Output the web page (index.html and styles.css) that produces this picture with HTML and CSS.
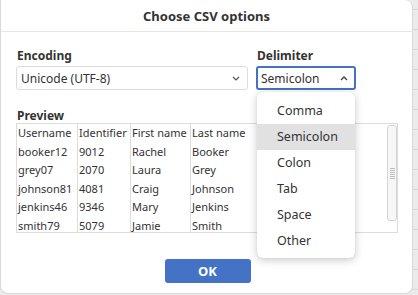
FILE: index.html
```html
<!DOCTYPE html>
<html>
<head>
<meta charset="utf-8">
<link rel="stylesheet" href="styles.css">
</head>
<body>
<div class="dialog">
  <div class="header">Choose CSV options</div>
  <div class="body">
    <div class="fields">
      <div class="field enc">
        <div class="label">Encoding</div>
        <div class="select">
          <span>Unicode (UTF-8)</span>
          <svg class="chev" width="8" height="5" viewBox="0 0 8 5"><path d="M1 1l3 3 3-3" fill="none" stroke="#555" stroke-width="1.2"/></svg>
        </div>
      </div>
      <div class="field delim">
        <div class="label">Delimiter</div>
        <div class="select focus">
          <span>Semicolon</span>
          <svg class="chev" width="8" height="5" viewBox="0 0 8 5"><path d="M1 4l3-3 3 3" fill="none" stroke="#444" stroke-width="1.4"/></svg>
        </div>
      </div>
    </div>
    <div class="label preview-label">Preview</div>
    <div class="table">
      <div class="col c1"><div>Username</div><div>booker12</div><div>grey07</div><div>johnson81</div><div>jenkins46</div><div>smith79</div></div>
      <div class="col c2"><div>Identifier</div><div>9012</div><div>2070</div><div>4081</div><div>9346</div><div>5079</div></div>
      <div class="col c3"><div>First name</div><div>Rachel</div><div>Laura</div><div>Craig</div><div>Mary</div><div>Jamie</div></div>
      <div class="col c4"><div>Last name</div><div>Booker</div><div>Grey</div><div>Johnson</div><div>Jenkins</div><div>Smith</div></div>
      <div class="scrollbar"><div class="grip"></div></div>
    </div>
    <div class="actions"><button class="ok">OK</button></div>
  </div>
  <div class="menu">
    <div class="item">Comma</div>
    <div class="item active">Semicolon</div>
    <div class="item">Colon</div>
    <div class="item">Tab</div>
    <div class="item">Space</div>
    <div class="item">Other</div>
  </div>
</div>
</body>
</html>
```

FILE: styles.css
```css
html, body {
  margin: 0;
  padding: 0;
}
body {
  width: 418px;
  height: 295px;
  overflow: hidden;
  background-color: #ebebeb;
  background-image: repeating-linear-gradient(to bottom, transparent 0, transparent 9px, #d8d8d8 9px, #d8d8d8 10px, transparent 10px, transparent 20px);
  font-family: "Noto Sans", "Open Sans", sans-serif;
  color: #333;
}
.dialog {
  position: relative;
  box-sizing: border-box;
  width: 413px;
  height: 294px;
  background: #fff;
  border: 1px solid #d9d9d9;
  border-top: none;
  border-radius: 0 8px 8px 8px;
  display: flex;
  flex-direction: column;
}
.header {
  box-sizing: border-box;
  height: 32px;
  border-bottom: 1px solid #e6e6e6;
  display: flex;
  align-items: center;
  justify-content: center;
  font-weight: bold;
  font-size: 13px;
  color: #333;
  padding-top: 1px;
}
.body {
  padding: 14px 0 0 15px;
  display: flex;
  flex-direction: column;
}
.fields {
  display: flex;
  gap: 8px;
}
.label {
  font-weight: bold;
  font-size: 12px;
  line-height: 19px;
  height: 20px;
  padding-left: 1px;
  color: #333;
}
.enc { width: 232px; }
.delim { width: 100px; }
.select {
  box-sizing: border-box;
  height: 24px;
  border: 1px solid #dcdcdc;
  border-radius: 3px;
  display: flex;
  align-items: center;
  justify-content: space-between;
  padding: 0 7px 0 4px;
  font-size: 12px;
  color: #333;
}
.select.focus {
  border: 2px solid #4472c4;
  padding: 0 6px 0 3px;
}
.preview-label {
  margin-top: 16px;
  height: 17px;
  line-height: 19px;
}
.table {
  position: relative;
  box-sizing: border-box;
  width: 382px;
  height: 110px;
  border: 1px solid #dcdcdc;
  display: flex;
  overflow: hidden;
  font-size: 11px;
  color: #333;
}
.col {
  border-right: 1px solid #dcdcdc;
  display: flex;
  flex-direction: column;
}
.col div {
  flex: none;
  height: 18.6px;
  line-height: 18.6px;
  padding-left: 1px;
  white-space: nowrap;
}
.c1 { width: 60px; }
.c2 { width: 52px; }
.c3 { width: 59px; }
.c4 { width: 70px; border-right: none; }
.scrollbar {
  position: absolute;
  left: 370px;
  top: 1px;
  width: 8px;
  height: 94px;
  border: 1px solid #d4d4d4;
  border-radius: 3px;
  background: #f7f7f7;
  display: flex;
  align-items: center;
  justify-content: center;
}
.grip {
  width: 5px;
  height: 11px;
  background: repeating-linear-gradient(to bottom, #bdbdbd 0, #bdbdbd 1px, transparent 1px, transparent 2px);
}
.actions {
  display: flex;
  justify-content: center;
  padding-right: 15px;
  margin-top: 26px;
}
.ok {
  width: 86px;
  height: 24px;
  border: none;
  border-radius: 3px;
  background: #4472c4;
  color: #fff;
  font-family: "Noto Sans", "Open Sans", sans-serif;
  font-weight: bold;
  font-size: 13px;
  margin-left: 2px;
}
.menu {
  position: absolute;
  left: 256px;
  top: 92px;
  width: 98px;
  box-sizing: border-box;
  padding: 6px 0 4px;
  background: #fff;
  border-radius: 6px;
  box-shadow: 0 2px 8px rgba(0,0,0,0.22), 0 0 1px rgba(0,0,0,0.15);
}
.item {
  height: 26px;
  line-height: 26px;
  padding-left: 20px;
  font-size: 12.5px;
  color: #333;
}
.item.active {
  background: #e1e1e1;
}
```
